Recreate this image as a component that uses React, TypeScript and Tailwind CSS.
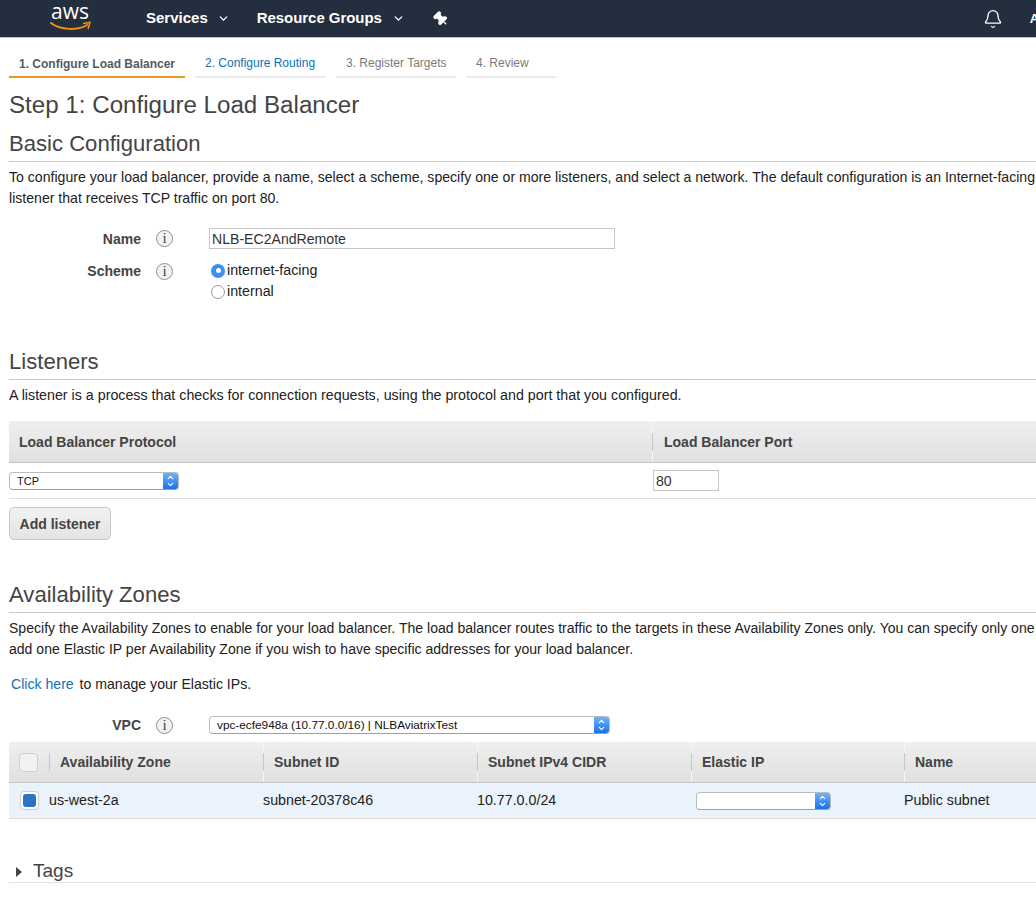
import { Bell, ChevronDown, ChevronUp, Pin } from "lucide-react";

const tabs = [
  { label: "1. Configure Load Balancer", w: "w-[176px]", cls: "pt-px font-bold text-[#545b64] border-[#f0932b]" },
  { label: "2. Configure Routing", w: "w-[131px]", cls: "text-[#0f6fb5] border-[#eaeaea]" },
  { label: "3. Register Targets", w: "w-[120px]", cls: "text-[#7a7a7a] border-[#eaeaea]" },
  { label: "4. Review", w: "w-[90px]", cls: "text-[#7a7a7a] border-[#eaeaea]" },
];

const zoneColumns = [
  { label: "Subnet ID", w: "w-[214px]" },
  { label: "Subnet IPv4 CIDR", w: "w-[214px]" },
  { label: "Elastic IP", w: "w-[213px]" },
  { label: "Name", w: "w-[122px]" },
];

function Info() {
  return (
    <span className="flex h-[17px] w-[17px] items-center justify-center rounded-full border border-[#8f8f8f] bg-[#f2f2f2] font-['Liberation_Serif',serif] text-[15px] leading-none text-[#444]">
      i
    </span>
  );
}

function Heading({ children }: { children: string }) {
  return (
    <h2 className="border-b border-[#c9c9c9] pb-[4px] text-[22.1px] leading-[26px] text-[#444]">{children}</h2>
  );
}

function Select({ value, width, textClass }: { value: string; width: string; textClass: string }) {
  return (
    <div className={`flex h-[18px] shrink-0 items-stretch overflow-hidden rounded-[4px] border border-[#bcbcbc] border-b-[#9f9f9f] bg-white ${width}`}>
      <span className={`flex-1 pl-[7px] leading-[17px] text-[#111] ${textClass}`}>{value}</span>
      <span className="flex w-[15px] flex-col items-center justify-center bg-gradient-to-b from-[#6cb3fa] to-[#1a6fe8] text-white">
        <ChevronUp className="-mb-px" size={9} strokeWidth={3} />
        <ChevronDown className="-mt-px" size={9} strokeWidth={3} />
      </span>
    </div>
  );
}

// short dark tick with a pale full-height line behind it
function Sep() {
  return (
    <span className="flex w-px shrink-0 items-center self-stretch bg-[#f5f5f5]">
      <span className="h-[18px] w-px bg-[#c6c6c6]" />
    </span>
  );
}

export default function App() {
  return (
    <div className="h-[901px] w-[1036px] overflow-hidden bg-white font-['Liberation_Sans',Arial,sans-serif] text-[14.1px] whitespace-nowrap text-[#222]">
      {/* top nav */}
      <header className="flex h-[38px] items-center border-b border-[#c4c4c4] bg-[#232f3e] font-bold text-white">
        <div className="relative ml-[50px] h-[37px] w-[46px] shrink-0">
          <span className="absolute top-[2px] left-[1px] font-['Open_Sans',sans-serif] text-[21px] leading-[18px] font-normal">aws</span>
          <svg className="absolute top-[21px] left-0" width="42" height="11" viewBox="0 0 42 11" fill="none">
            <path d="M1 2 C10 9 28 10 37 4" stroke="#f29111" strokeWidth="2" strokeLinecap="round" />
            <path d="M33 2.5 L40 1.5 L38 8" stroke="#f29111" strokeWidth="1.5" fill="none" />
          </svg>
        </div>
        <span className="ml-[50px] text-[15px]">Services</span>
        <ChevronDown className="ml-[9px] shrink-0" size={13} strokeWidth={2.5} />
        <span className="ml-[27px] text-[15px] tracking-[-0.05px]">Resource Groups</span>
        <ChevronDown className="ml-[10px] shrink-0" size={13} strokeWidth={2.5} />
        <Pin className="ml-[28px] shrink-0 rotate-[-45deg]" size={16} fill="white" strokeWidth={2} />
        <Bell className="ml-[534px] shrink-0" size={20} strokeWidth={1.6} />
        <span className="ml-[27px] text-[13px]">A</span>
      </header>

      <main className="pl-[9px]">
        {/* wizard steps */}
        <nav className="mt-[13px] flex gap-[10px] text-[12px]">
          {tabs.map((t) => (
            <div key={t.label} className={`h-[27px] border-b-2 pl-[10px] leading-[24px] ${t.w} ${t.cls}`}>
              {t.label}
            </div>
          ))}
        </nav>

        <h1 className="mt-[13px] text-[24.15px] leading-[28px] text-[#444]">Step 1: Configure Load Balancer</h1>

        <section className="mt-[12px]">
          <Heading>Basic Configuration</Heading>
          <p className="mt-[5px] leading-[21px]">
            To configure your load balancer, provide a name, select a scheme, specify one or more listeners, and select a network. The default configuration is an Internet-facing
            <br />
            listener that receives TCP traffic on port 80.
          </p>
          <div className="mt-[19px] flex h-[21px] items-center">
            <span className="w-[132px] pt-[2px] text-right text-[14px] font-bold text-[#444]">Name</span>
            <span className="ml-[15px]"><Info /></span>
            <span className="ml-[36px] h-[21px] w-[406px] border border-[#c6c6c6] pl-[2px] leading-[20px] text-[#333]">NLB-EC2AndRemote</span>
          </div>
          <div className="mt-[12px] flex items-start">
            <span className="w-[132px] text-right text-[14px] leading-[21px] font-bold text-[#444]">Scheme</span>
            <span className="mt-[2px] ml-[15px]"><Info /></span>
            <div className="-mt-px ml-[38px] text-[14.25px] leading-[21px]">
              <div className="flex items-center">
                <span className="flex h-[14px] w-[14px] items-center justify-center rounded-full bg-[#3b92ee]">
                  <span className="h-[5px] w-[5px] rounded-full bg-white" />
                </span>
                <span className="ml-[2px]">internet-facing</span>
              </div>
              <div className="flex items-center">
                <span className="h-[14px] w-[14px] rounded-full border border-[#9a9a9a] bg-white" />
                <span className="ml-[2px]">internal</span>
              </div>
            </div>
          </div>
        </section>

        <section className="mt-[47px]">
          <Heading>Listeners</Heading>
          <p className="mt-[5px] text-[14.25px] leading-[21px]">A listener is a process that checks for connection requests, using the protocol and port that you configured.</p>
          <div className="mt-[15px] flex h-[42px] items-center border-b border-[#c4c4c4] bg-gradient-to-b from-[#efefef] to-[#e0e0e0] text-[14px] font-bold text-[#444]">
            <span className="w-[643px] pt-[2px] pl-[10px]">Load Balancer Protocol</span>
            <Sep />
            <span className="pt-[2px] pl-[11px]">Load Balancer Port</span>
          </div>
          <div className="flex h-[36px] items-center border-b border-[#dedede]">
            <Select value="TCP" width="w-[170px]" textClass="text-[11px]" />
            <span className="ml-[474px] h-[21px] w-[66px] border border-[#c6c6c6] pl-[2px] leading-[20px] text-[#333]">80</span>
          </div>
          <button className="mt-[8px] h-[33px] w-[102px] rounded-[5px] border border-[#c6c6c6] bg-gradient-to-b from-[#f2f2f2] to-[#e4e4e4] pt-px text-[14px] font-bold text-[#444]">
            Add listener
          </button>
        </section>

        <section className="mt-[42px]">
          <Heading>Availability Zones</Heading>
          <p className="mt-[5px] text-[14.05px] leading-[21px]">
            Specify the Availability Zones to enable for your load balancer. The load balancer routes traffic to the targets in these Availability Zones only. You can specify only one
            <br />
            add one Elastic IP per Availability Zone if you wish to have specific addresses for your load balancer.
          </p>
          <p className="mt-[14px] ml-[2px] leading-[21px]">
            <span className="mr-[2px] text-[#0f6fb5]">Click here</span> to manage your Elastic IPs.
          </p>
          <div className="mt-[20px] flex h-[21px] items-center">
            <span className="w-[132px] text-right text-[14px] font-bold text-[#444]">VPC</span>
            <span className="ml-[15px]"><Info /></span>
            <span className="-mt-[2px] ml-[36px]">
              <Select value="vpc-ecfe948a (10.77.0.0/16) | NLBAviatrixTest" width="w-[401px]" textClass="text-[11.8px]" />
            </span>
          </div>
          <div className="mt-[6px] flex h-[41px] items-center border-b border-[#c4c4c4] bg-gradient-to-b from-[#efefef] to-[#e0e0e0] text-[14px] font-bold text-[#444]">
            <span className="ml-[10px] h-[19px] w-[19px] shrink-0 rounded-[4px] border border-[#cfcfcf] bg-[#f2f2f2]" />
            <span className="ml-[11px] h-[18px] w-px shrink-0 bg-[#c6c6c6]" />
            <span className="w-[213px] shrink-0 pl-[10px]">Availability Zone</span>
            {zoneColumns.map((c) => (
              <div key={c.label} className={`flex shrink-0 items-center self-stretch ${c.w}`}>
                <Sep />
                <span className="pl-[10px]">{c.label}</span>
              </div>
            ))}
          </div>
          <div className="flex h-[36px] items-center border-b border-[#dcdcdc] bg-[#eaf2fb] text-[14.25px]">
            <span className="ml-[11px] flex h-[19px] w-[19px] items-center justify-center rounded-[4px] border border-[#cfcfcf] bg-white">
              <span className="h-[13px] w-[13px] rounded-[3px] bg-[#2a73c5]" />
            </span>
            <span className="ml-[10px] w-[214px]">us-west-2a</span>
            <span className="w-[214px]">subnet-20378c46</span>
            <span className="w-[219px]">10.77.0.0/24</span>
            <Select value="" width="w-[135px]" textClass="text-[11px]" />
            <span className="ml-[73px]">Public subnet</span>
          </div>
        </section>

        <section className="mt-[42px] flex h-[22px] items-center border-b border-[#e2e2e2]">
          <span className="ml-[7px] h-0 w-0 border-y-[5px] border-l-[6px] border-y-transparent border-l-[#444]" />
          <span className="ml-[11px] text-[19px] text-[#444]">Tags</span>
        </section>
      </main>
    </div>
  );
}
